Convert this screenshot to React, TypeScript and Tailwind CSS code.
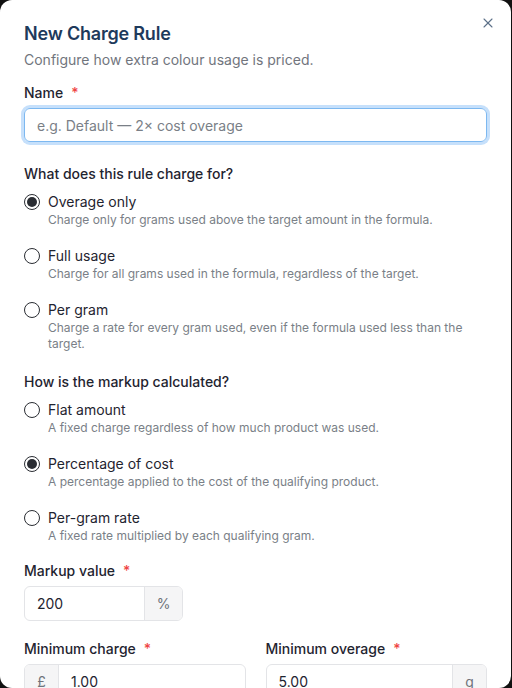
import { X } from 'lucide-react';

type Option = { label: string; hint: string; checked?: boolean };

const chargeOptions: Option[] = [
  { label: 'Overage only', hint: 'Charge only for grams used above the target amount in the formula.', checked: true },
  { label: 'Full usage', hint: 'Charge for all grams used in the formula, regardless of the target.' },
  { label: 'Per gram', hint: 'Charge a rate for every gram used, even if the formula used less than the target.' },
];

const markupOptions: Option[] = [
  { label: 'Flat amount', hint: 'A fixed charge regardless of how much product was used.' },
  { label: 'Percentage of cost', hint: 'A percentage applied to the cost of the qualifying product.', checked: true },
  { label: 'Per-gram rate', hint: 'A fixed rate multiplied by each qualifying gram.' },
];

function Label({ text }: { text: string }) {
  return (
    <div className="text-sm font-medium leading-5 text-[#1f2430]">
      {text}
      <span className="ml-2 text-[#ef4444]">*</span>
    </div>
  );
}

function RadioList({ options }: { options: Option[] }) {
  return (
    <div className="mt-2 flex flex-col gap-[18px]">
      {options.map(o => (
        <label key={o.label} className="flex gap-2">
          <span className="mt-0.5 flex h-4 w-4 shrink-0 items-center justify-center rounded-full border border-[#2a2d33]">
            {o.checked && <span className="h-2.5 w-2.5 rounded-full bg-[#2a2d33]" />}
          </span>
          <span className="flex flex-col">
            <span className="text-sm leading-5 text-[#1f2430]">{o.label}</span>
            <span className="text-xs leading-4 text-[#7a7f87] pr-6">{o.hint}</span>
          </span>
        </label>
      ))}
    </div>
  );
}

export default function App() {
  return (
    <div className="h-[688px] w-[512px] bg-[#111] font-['Inter',sans-serif]">
      <div className="relative h-full w-[511px] overflow-hidden rounded-[12px] bg-white px-6 pt-5">
        <button className="absolute right-[15px] top-[15px] text-[#5d7189]">
          <X size={16} strokeWidth={1.6} />
        </button>

        <h2 className="text-lg font-semibold leading-7 tracking-[-0.2px] text-[#1e3a5c]">New Charge Rule</h2>
        <p className="mt-0.5 text-sm leading-5 text-[#71757d]">Configure how extra colour usage is priced.</p>

        <div className="mt-[13px]">
          <Label text="Name" />
          <input
            placeholder="e.g. Default — 2× cost overage"
            className="mt-[5px] h-[34px] w-full rounded-md border border-[#7db8f0] px-3 text-sm text-[#1f2430] outline-none ring-[3px] ring-[#c6e0fb] placeholder:text-[#7a7f87]"
          />
        </div>

        <div className="mt-[22px]">
          <div className="text-sm font-medium leading-5 text-[#1f2430]">What does this rule charge for?</div>
          <RadioList options={chargeOptions} />
        </div>

        <div className="mt-5">
          <div className="text-sm font-medium leading-5 text-[#1f2430]">How is the markup calculated?</div>
          <RadioList options={markupOptions} />
        </div>

        <div className="mt-[17px]">
          <Label text="Markup value" />
          <div className="mt-[5px] flex h-[35px] w-[159px] overflow-hidden rounded-md border border-[#e3e4e7]">
            <input defaultValue="200" className="min-w-0 flex-1 px-3 text-sm text-[#1f2430] outline-none" />
            <span className="flex w-[38px] items-center justify-center border-l border-[#e3e4e7] bg-[#f5f5f6] text-sm text-[#6f737a]">%</span>
          </div>
        </div>

        <div className="mt-[18px] grid grid-cols-2 gap-x-5">
          <div>
            <Label text="Minimum charge" />
            <div className="mt-[5px] flex h-[35px] overflow-hidden rounded-md border border-[#e3e4e7]">
              <span className="flex w-[34px] items-center justify-center border-r border-[#e3e4e7] bg-[#f5f5f6] text-sm text-[#6f737a]">£</span>
              <input defaultValue="1.00" className="min-w-0 flex-1 px-3 text-sm text-[#1f2430] outline-none" />
            </div>
          </div>
          <div>
            <Label text="Minimum overage" />
            <div className="mt-[5px] flex h-[35px] overflow-hidden rounded-md border border-[#e3e4e7]">
              <input defaultValue="5.00" className="min-w-0 flex-1 px-3 text-sm text-[#1f2430] outline-none" />
              <span className="flex w-[34px] items-center justify-center border-l border-[#e3e4e7] bg-[#f5f5f6] text-sm text-[#6f737a]">g</span>
            </div>
          </div>
        </div>
      </div>
    </div>
  );
}
